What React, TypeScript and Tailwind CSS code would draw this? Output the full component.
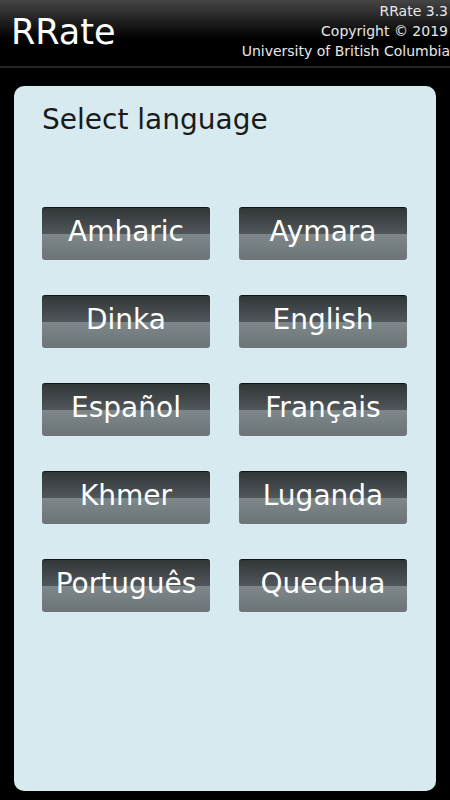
const languages = [
  "Amharic",
  "Aymara",
  "Dinka",
  "English",
  "Español",
  "Français",
  "Khmer",
  "Luganda",
  "Português",
  "Quechua",
];

const LangButton = ({ label }: { label: string }) => (
  <button className="h-[53px] w-[168px] rounded-[3px] border-t border-[#121414] bg-[linear-gradient(to_bottom,#323638_0%,#50575a_50%,#7e888b_50%,#6b7477_100%)] text-[28px] leading-[32px] text-white flex items-center justify-center pb-[5px]">
    {label}
  </button>
);

export default function App() {
  return (
    <div
      className="w-[450px] h-[800px] bg-black flex flex-col overflow-hidden"
      style={{ fontFamily: '"DejaVu Sans", sans-serif' }}
    >
      {/* header bar */}
      <div className="h-[68px] shrink-0 bg-[linear-gradient(to_bottom,#454545_0%,#101010_45%,#000_60%)] border-b-2 border-[#262626] flex justify-between">
        <div className="pl-[11px] pt-[8px] text-[35px] leading-[48px] text-white">RRate</div>
        <div className="pr-[2px] pt-[1px] text-right text-[14px] leading-[20px] text-[#e8e8e8]">
          <div>RRate 3.3</div>
          <div>Copyright © 2019</div>
          <div className="-mr-[2px]">University of British Columbia</div>
        </div>
      </div>

      {/* content panel */}
      <div className="mt-[18px] mx-[14px] mb-[9px] flex-1 rounded-[10px] bg-[#d7eaf0] pl-[28px] pt-[18px]">
        <div className="text-[28px] leading-[32px] text-[#1a1a1a]">Select language</div>
        <div className="mt-[71px] grid grid-cols-[168px_168px] gap-x-[29px] gap-y-[35px]">
          {languages.map((l) => (
            <LangButton key={l} label={l} />
          ))}
        </div>
      </div>
    </div>
  );
}
